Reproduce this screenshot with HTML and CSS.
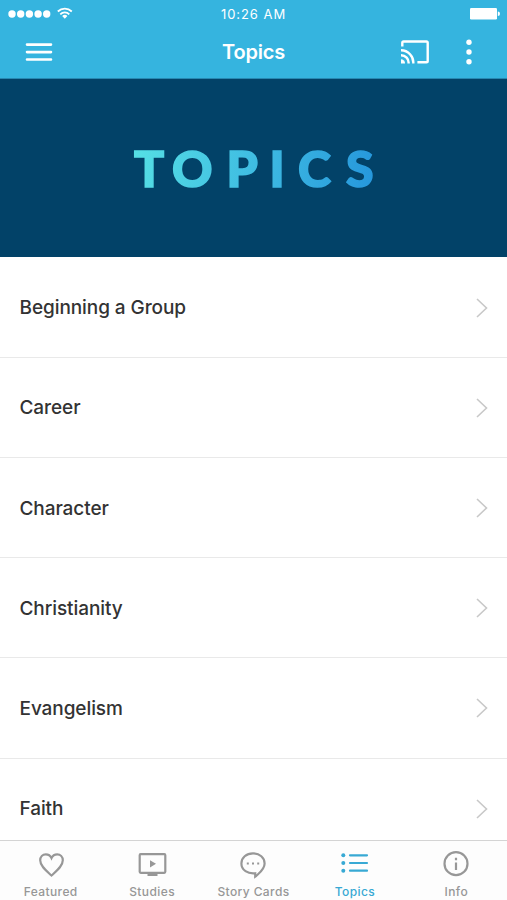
FILE: index.html
```html
<!DOCTYPE html>
<html lang="en">
<head>
<meta charset="utf-8">
<title>Topics</title>
<link rel="stylesheet" href="styles.css">
</head>
<body>
<div class="app">
  <header class="header">
    <div class="status">
      <svg class="signal" width="74" height="16" viewBox="0 0 74 16" fill="#fff">
        <circle cx="5" cy="8" r="3.7"/><circle cx="13.7" cy="8" r="3.7"/><circle cx="22.4" cy="8" r="3.7"/><circle cx="31.1" cy="8" r="3.7"/><circle cx="39.7" cy="8" r="3.7"/>
        <g fill="none" stroke="#fff" stroke-width="1.8"><path d="M50.8 5.500a10.200 10.200 0 0 1 14 0"/><path d="M53.300 8.300a6.400 6.400 0 0 1 9 0"/></g>
        <path d="M55.200 9.900a4 4 0 0 1 5.200 0L57.800 12.800z"/>
      </svg>
      <span class="time">10:26 AM</span>
      <svg class="battery" width="31" height="14" viewBox="0 0 31 14" fill="#fff"><rect x="0" y="1" width="27" height="11.500" rx="1.200"/><path d="M27.800 4.600a2.200 2.200 0 0 1 0 4.400z"/></svg>
    </div>
    <nav class="navbar">
      <svg class="menu" width="28" height="20" viewBox="0 0 28 20" stroke="#fff" stroke-width="2.6" stroke-linecap="round"><path d="M2 2.600h24M2 10.100h24M2 17.500h24"/></svg>
      <h1 class="title">Topics</h1>
      <div class="actions">
        <svg width="28" height="24" viewBox="0 0 28 24" fill="none" stroke="#fff" stroke-width="2.4"><path d="M1.300 6.500V2.800a1.300 1.300 0 0 1 1.300-1.300h22.800a1.300 1.300 0 0 1 1.300 1.300v18.100a1.300 1.300 0 0 1-1.300 1.300h-9"/><path d="M0 10.300a12.300 12.300 0 0 1 12.300 13.200M0 15.200a7.600 7.600 0 0 1 7.600 8.300"/><path d="M0 19.300a4 4 0 0 1 4 4.200H0z" fill="#fff" stroke="none"/></svg>
        <svg width="6" height="26" viewBox="0 0 6 26" fill="#fff"><circle cx="3" cy="3.200" r="2.700"/><circle cx="3" cy="13" r="2.700"/><circle cx="3" cy="22.800" r="2.700"/></svg>
      </div>
    </nav>
  </header>
  <div class="banner">
    <svg width="507" height="178" viewBox="0 0 507 178">
      <defs><linearGradient id="tint" gradientUnits="userSpaceOnUse" x1="135" y1="75" x2="374" y2="105"><stop offset="0" stop-color="#55dfe5"/><stop offset=".5" stop-color="#3fbce2"/><stop offset="1" stop-color="#2697dc"/></linearGradient></defs>
      <text class="wordmark" x="134 172 226.5 269.5 298 346" y="107.500" fill="url(#tint)" stroke="url(#tint)">TOPICS</text>
    </svg>
  </div>
  <main class="list">
    <a class="row">Beginning a Group<svg class="chevron" viewBox="0 0 12 20"><path d="M1 1l9.500 9L1 19"/></svg></a>
    <a class="row">Career<svg class="chevron" viewBox="0 0 12 20"><path d="M1 1l9.500 9L1 19"/></svg></a>
    <a class="row">Character<svg class="chevron" viewBox="0 0 12 20"><path d="M1 1l9.500 9L1 19"/></svg></a>
    <a class="row">Christianity<svg class="chevron" viewBox="0 0 12 20"><path d="M1 1l9.500 9L1 19"/></svg></a>
    <a class="row">Evangelism<svg class="chevron" viewBox="0 0 12 20"><path d="M1 1l9.500 9L1 19"/></svg></a>
    <a class="row">Faith<svg class="chevron" viewBox="0 0 12 20"><path d="M1 1l9.500 9L1 19"/></svg></a>
  </main>
  <footer class="tabs">
    <a class="tab"><svg viewBox="0 0 30 28"><path d="M15.500 24.500C10.500 20 4.200 15.200 4.200 9.300c0-3.500 2.500-6 5.600-6 2.400 0 4.600 1.400 5.700 3.800 1.100-2.400 3.300-3.800 5.700-3.800 3.100 0 5.600 2.500 5.600 6 0 5.900-6.300 10.700-11.300 15.200z"/></svg>Featured</a>
    <a class="tab"><svg viewBox="0 0 30 28"><rect x="2.700" y="3.200" width="25.600" height="18.600" rx="1"/><path class="solid" d="M13 9.200l6 3.600-6 3.600zM10.500 22h10v3h-10z"/></svg>Studies</a>
    <a class="tab"><svg viewBox="0 0 30 28"><path d="M15 2.400c6.700 0 11.600 4.300 11.600 10.100 0 5.800-4.800 9-8.300 12.300l-1.100.8v-3.300c-7.500.8-13.800-3.200-13.800-9.800C3.400 6.700 8.300 2.400 15 2.400z"/><path class="solid" d="M8.800 11.500h2v2h-2zM14 11.500h2v2h-2zM19.200 11.500h2v2h-2z"/></svg>Story Cards</a>
    <a class="tab active"><svg viewBox="0 0 30 28"><path stroke-linecap="round" d="M10 4.300h17M10 12h17M10 19.700h17"/><g class="solid"><circle cx="3.300" cy="4.300" r="2"/><circle cx="3.300" cy="12" r="2"/><circle cx="3.300" cy="19.700" r="2"/></g></svg>Topics</a>
    <a class="tab"><svg viewBox="0 0 30 28"><circle cx="15" cy="12.700" r="11.500"/><path d="M15 11.500v7.500M15 6.700v2.500"/></svg>Info</a>
  </footer>
</div>
</body>
</html>
```
FILE: styles.css
```css
* { box-sizing: border-box; }
body { margin: 0; font-family: Inter, "Liberation Sans", sans-serif; background: #fff; }
svg { display: block; flex: none; }
.app { width: 507px; height: 900px; display: flex; flex-direction: column; overflow: hidden; }
.header { height: 79px; flex: none; background: #35b4df; color: #fff; border-bottom: 1px solid #2788b2; }
.status { height: 27px; display: grid; grid-template-columns: 1fr auto 1fr; align-items: center; padding: 0 6px; }
.signal { margin-left: 1px; }
.time { font-size: 13px; letter-spacing: .95px; }
.battery { justify-self: end; }
.navbar { height: 50px; display: grid; grid-template-columns: 1fr auto 1fr; align-items: center; padding: 0 35.5px 0 25px; }
.title { margin: 0 0 0 10.5px; font-size: 20px; line-height: 24px; font-weight: 600; letter-spacing: -.2px; }
.actions { display: flex; justify-content: flex-end; align-items: center; gap: 37px; }
.banner { height: 178px; flex: none; background: #024268; }
.wordmark { font-family: Lato, sans-serif; font-weight: 900; font-size: 50px; stroke-width: 1.6px; }
.list { flex: 1; min-height: 0; overflow: hidden; padding-top: .6px; }
.row { height: 100.2px; display: flex; align-items: center; justify-content: space-between; padding: 1px 19.5px 0 19.5px; border-bottom: 1px solid #e9e9e9; font-size: 19px; font-weight: 500; color: #333; letter-spacing: -.08px; }
.chevron { width: 12px; height: 20px; fill: none; stroke: #c8c8c8; stroke-width: 1.6; }
.tabs { height: 60px; flex: none; display: grid; grid-template-columns: repeat(5, 1fr); border-top: 1px solid #d4d4d4; background: #fdfdfd; }
.tab { display: flex; flex-direction: column; align-items: center; padding-top: 10px; color: #979797; font-size: 12px; line-height: 16px; font-weight: 500; letter-spacing: .4px; white-space: nowrap; }
.tab svg { width: 30px; height: 28px; margin-bottom: 4.500px; fill: none; stroke: currentColor; stroke-width: 2.2; }
.tab .solid { fill: currentColor; stroke: none; }
.active { color: #38a9d4; }
```
